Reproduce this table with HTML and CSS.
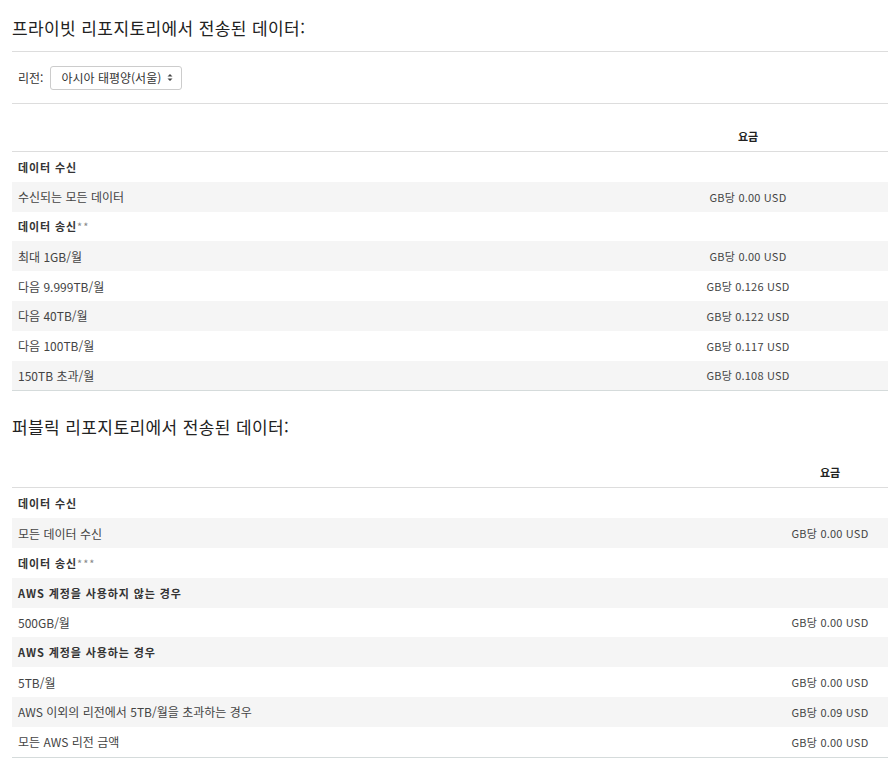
FILE: index.html
```html
<!DOCTYPE html>
<html lang="ko">
<head>
    <meta charset="UTF-8">
    <meta name="viewport" content="width=device-width, initial-scale=1.0">
    <title>데이터 전송 요금</title>
    <link rel="stylesheet" href="styles.css">
</head>
<body>
    <h3 class="section-title first">프라이빗 리포지토리에서 전송된 데이터:</h3>
    <div class="region-bar">
        <label for="region">리전:</label>
        <div class="select-box" id="region">
            <span>아시아 태평양(서울)</span>
            <svg class="arrows" width="6" height="9" viewBox="0 0 6 9"><path d="M0.5 3.5 L3 1 L5.5 3.5 Z M0.5 5.5 L3 8 L5.5 5.5 Z" fill="#444"/></svg>
        </div>
    </div>

    <table class="price-table private">
        <thead>
            <tr><th></th><th class="price">요금</th></tr>
        </thead>
        <tbody>
            <tr class="group"><td>데이터 수신</td><td></td></tr>
            <tr class="stripe"><td>수신되는 모든 데이터</td><td class="price">GB당 0.00 USD</td></tr>
            <tr class="group"><td>데이터 송신<span class="note">**</span></td><td></td></tr>
            <tr class="stripe"><td>최대 1GB/월</td><td class="price">GB당 0.00 USD</td></tr>
            <tr><td>다음 9.999TB/월</td><td class="price">GB당 0.126 USD</td></tr>
            <tr class="stripe"><td>다음 40TB/월</td><td class="price">GB당 0.122 USD</td></tr>
            <tr><td>다음 100TB/월</td><td class="price">GB당 0.117 USD</td></tr>
            <tr class="stripe"><td>150TB 초과/월</td><td class="price">GB당 0.108 USD</td></tr>
        </tbody>
    </table>

    <h3 class="section-title second">퍼블릭 리포지토리에서 전송된 데이터:</h3>

    <table class="price-table public">
        <thead>
            <tr><th></th><th class="price">요금</th></tr>
        </thead>
        <tbody>
            <tr class="group"><td>데이터 수신</td><td></td></tr>
            <tr class="stripe"><td>모든 데이터 수신</td><td class="price">GB당 0.00 USD</td></tr>
            <tr class="group"><td>데이터 송신<span class="note">***</span></td><td></td></tr>
            <tr class="group stripe"><td>AWS 계정을 사용하지 않는 경우</td><td></td></tr>
            <tr><td>500GB/월</td><td class="price">GB당 0.00 USD</td></tr>
            <tr class="group stripe"><td>AWS 계정을 사용하는 경우</td><td></td></tr>
            <tr><td>5TB/월</td><td class="price">GB당 0.00 USD</td></tr>
            <tr class="stripe"><td>AWS 이외의 리전에서 5TB/월을 초과하는 경우</td><td class="price">GB당 0.09 USD</td></tr>
            <tr><td>모든 AWS 리전 금액</td><td class="price">GB당 0.00 USD</td></tr>
        </tbody>
    </table>
</body>
</html>
```

FILE: styles.css
```css
body {
    font-family: "Noto Sans CJK KR", "Noto Sans", sans-serif;
    color: #333;
    margin: 0 0 0 12px;
    width: 876px;
    font-size: 12px;
}
.section-title {
    font-size: 17px;
    letter-spacing: 0.4px;
    font-weight: normal;
    color: #222;
    margin: 0;
    line-height: 24px;
}
.section-title.first {
    padding: 16px 0 11px;
    border-bottom: 1px solid #ddd;
}
.section-title.second {
    margin-top: 24px;
}
.region-bar {
    display: flex;
    align-items: center;
    height: 51px;
    padding-left: 6px;
    border-bottom: 1px solid #ddd;
}
.region-bar label {
    margin-right: 7px;
    font-size: 12px;
}
.select-box {
    display: flex;
    align-items: center;
    justify-content: space-between;
    box-sizing: border-box;
    width: 132px;
    height: 24px;
    padding: 0 8px 0 10px;
    border: 1px solid #ccc;
    border-radius: 3px;
    font-size: 12px;
    background: #fff;
}
.price-table {
    width: 876px;
    border-collapse: collapse;
    table-layout: fixed;
    border-bottom: 1px solid #d5dbdb;
}
.price-table.private {
    margin-top: 17px;
}
.price-table.public {
    margin-top: 18px;
}
.price-table th {
    height: 30px;
    font-weight: bold;
    font-size: 11px;
    color: #222;
    border-bottom: 1px solid #ddd;
    padding: 0;
}
.price-table td {
    height: 29.8px;
    padding: 0 6px;
    font-size: 12px;
    color: #444;
}
.price-table td.price {
    text-align: center;
    font-size: 11px;
    letter-spacing: 0.2px;
}
.price-table th.price {
    text-align: center;
}
.private .price {
    width: 280px;
}
.public .price {
    width: 116px;
}
.price-table tr.stripe td {
    background: #f5f5f5;
}
.price-table tr.group td {
    font-weight: bold;
    font-size: 11px;
    letter-spacing: 0.9px;
    color: #333;
}
.note {
    font-weight: normal;
    color: #888;
}
```
